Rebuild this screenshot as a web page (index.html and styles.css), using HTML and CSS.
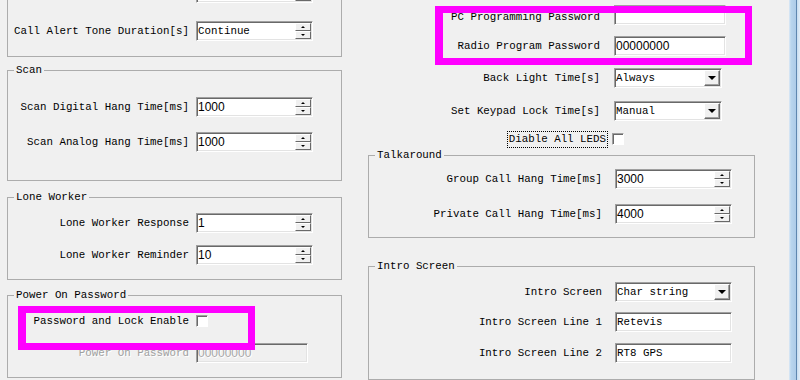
FILE: index.html
```html
<!DOCTYPE html>
<html lang="en">
<head>
    <meta charset="UTF-8">
    <title>Radio Settings</title>
    <link rel="stylesheet" href="styles.css">
</head>
<body>
<div class="screen">
    <div class="col-left">
        <fieldset class="group group-top">
            <div class="row">
                <span class="label"></span>
                <div class="spin"><span class="val"></span><div class="spin-btns"><i class="up"></i><i class="down"></i></div></div>
            </div>
            <div class="row">
                <span class="label">Call Alert Tone Duration[s]</span>
                <div class="spin"><span class="val mono">Continue</span><div class="spin-btns"><i class="up"></i><i class="down"></i></div></div>
            </div>
        </fieldset>

        <fieldset class="group group-scan">
            <legend>Scan</legend>
            <div class="row">
                <span class="label">Scan Digital Hang Time[ms]</span>
                <div class="spin"><span class="val">1000</span><div class="spin-btns"><i class="up"></i><i class="down"></i></div></div>
            </div>
            <div class="row">
                <span class="label">Scan Analog Hang Time[ms]</span>
                <div class="spin"><span class="val">1000</span><div class="spin-btns"><i class="up"></i><i class="down"></i></div></div>
            </div>
        </fieldset>

        <fieldset class="group group-lone">
            <legend>Lone Worker</legend>
            <div class="row">
                <span class="label">Lone Worker Response</span>
                <div class="spin"><span class="val">1</span><div class="spin-btns"><i class="up"></i><i class="down"></i></div></div>
            </div>
            <div class="row">
                <span class="label">Lone Worker Reminder</span>
                <div class="spin"><span class="val">10</span><div class="spin-btns"><i class="up"></i><i class="down"></i></div></div>
            </div>
        </fieldset>

        <fieldset class="group group-power">
            <legend>Power On Password</legend>
            <div class="row">
                <span class="label">Password and Lock Enable</span>
                <span class="check"></span>
            </div>
            <div class="row">
                <span class="label disabled">Power On Password</span>
                <div class="edit edit-off"><span class="val">00000000</span></div>
            </div>
        </fieldset>
    </div>

    <div class="col-right">
        <div class="plain">
            <div class="row">
                <span class="label low">PC Programming Password</span>
                <div class="edit edit-pw"><span class="val"></span></div>
            </div>
            <div class="row">
                <span class="label">Radio Program Password</span>
                <div class="edit edit-pw"><span class="val">00000000</span></div>
            </div>
            <div class="row">
                <span class="label">Back Light Time[s]</span>
                <div class="combo combo-short"><span class="val mono">Always</span><span class="drop"><i></i></span></div>
            </div>
            <div class="row">
                <span class="label">Set Keypad Lock Time[s]</span>
                <div class="combo combo-short"><span class="val mono">Manual</span><span class="drop"><i></i></span></div>
            </div>
            <div class="check-row">
                <span class="focus">Diable All LEDS</span>
                <span class="check"></span>
            </div>
        </div>

        <fieldset class="group group-talk">
            <legend>Talkaround</legend>
            <div class="row">
                <span class="label">Group Call Hang Time[ms]</span>
                <div class="spin"><span class="val">3000</span><div class="spin-btns"><i class="up"></i><i class="down"></i></div></div>
            </div>
            <div class="row">
                <span class="label">Private Call Hang Time[ms]</span>
                <div class="spin"><span class="val">4000</span><div class="spin-btns"><i class="up"></i><i class="down"></i></div></div>
            </div>
        </fieldset>

        <fieldset class="group group-intro">
            <legend>Intro Screen</legend>
            <div class="row">
                <span class="label">Intro Screen</span>
                <div class="combo"><span class="val mono">Char string</span><span class="drop"><i></i></span></div>
            </div>
            <div class="row">
                <span class="label">Intro Screen Line 1</span>
                <div class="edit"><span class="val mono">Retevis</span></div>
            </div>
            <div class="row">
                <span class="label">Intro Screen Line 2</span>
                <div class="edit"><span class="val mono">RT8 GPS</span></div>
            </div>
        </fieldset>
    </div>

    <div class="frame-edge"></div>
</div>

<div class="mark mark-left"></div>
<div class="mark mark-right"></div>
</body>
</html>
```

FILE: styles.css
```css
*{margin:0;padding:0;box-sizing:border-box;}
html,body{height:100%;}
body{
    position:relative;
    background:#f0f0f0;
    color:#000;
    font:10.8px/13px "Liberation Mono",monospace;
    overflow:hidden;
}
.screen{
    display:flex;
    height:380px;
}
.col-left{
    width:368px;
    padding-left:7px;
    display:flex;
    flex-direction:column;
}
.col-right{
    width:387px;
    display:flex;
    flex-direction:column;
}
.frame-edge{
    margin-left:auto;
    width:11px;
    background:linear-gradient(to right,#dce9f5 0,#b9d5ee 2px,#aecbe8 7px,#5f87b0 7px,#5f87b0 8px,#c7dcf0 8px,#e3eef8 11px);
}

/* group boxes */
.group{
    border:1px solid #acacac;
    min-width:0;
}
.group legend{
    margin-left:6px;
    padding:0 2px;
    line-height:13px;
}
.col-left .group{width:335px;}
.col-right .group{width:387px;}

.group-top{margin-top:-40px;padding:22px 0 15px;}
.group-top .row + .row{margin-top:18px;}
.group-scan{margin-top:7px;padding:20px 0 28px;}
.group-scan .row + .row{margin-top:15px;}
.group-lone{margin-top:10px;padding:9px 0 14px;}
.group-lone .row + .row{margin-top:12px;}
.group-power{margin-top:9px;padding:9px 0 14px;}
.group-power .row + .row{margin-top:12px;}

.group-talk{padding:7px 0 13px;}
.group-talk .row + .row{margin-top:15px;}
.group-intro{margin-top:22px;padding:9px 0 16px;}
.group-intro .row + .row{margin-top:10px;}
.group-intro .row:last-child{margin-top:11px;}

/* rows */
.row{
    display:grid;
    grid-template-columns:181px auto;
    column-gap:7px;
    align-items:center;
    height:20px;
}
.col-right .row{
    grid-template-columns:233px auto;
    column-gap:13px;
}
.plain{padding-top:5px;}
.plain .row:nth-child(2){margin-top:11px;}
.plain .row:nth-child(3){margin-top:12px;}
.plain .row:nth-child(4){margin-top:13px;}
.label{
    text-align:right;
    white-space:nowrap;
}
.label.low{padding-top:4px;}
.label.disabled{
    color:#a0a0a0;
    text-shadow:1px 1px 0 #fff;
}
.plain .row .label{padding-right:1px;}

/* fields */
.val{
    flex:1;
    padding-left:1px;
    font:12px/16px "Liberation Sans",Arial,sans-serif;
    white-space:nowrap;
    overflow:hidden;
}
.val.mono{font:10.8px/16px "Liberation Mono",monospace;}
.spin,.edit,.combo{
    display:flex;
    align-items:center;
    width:117px;
    height:20px;
    background:#fff;
    border:1px solid;
    border-color:#a0a0a0 #fff #fff #a0a0a0;
    box-shadow:inset 1px 1px 0 #696969,inset -1px -1px 0 #e3e3e3;
}
.edit-pw{width:112px;}
.edit-off{
    width:112px;
    background:#f0f0f0;
}
.edit-off .val{
    color:#a8a8a8;
    text-shadow:1px 1px 0 #fff;
}
.combo-short{width:108px;}
.spin-btns{
    display:flex;
    flex-direction:column;
    width:16px;
    height:16px;
    margin-right:1px;
}
.spin-btns i{
    flex:1;
    display:flex;
    align-items:center;
    justify-content:center;
    background:#f0f0f0;
    border:1px solid;
    border-color:#fff #696969 #696969 #fff;
}
.spin-btns i::after{
    content:"";
    border-left:2px solid transparent;
    border-right:2px solid transparent;
}
.spin-btns .up::after{border-bottom:2px solid #000;}
.spin-btns .down::after{border-top:2px solid #000;}
.drop{
    display:flex;
    align-items:center;
    justify-content:center;
    width:16px;
    height:16px;
    margin-right:1px;
    background:#f0f0f0;
    border:1px solid;
    border-color:#fff #696969 #696969 #fff;
    box-shadow:inset -1px -1px 0 #a0a0a0;
}
.drop i{
    border-left:4px solid transparent;
    border-right:4px solid transparent;
    border-top:4px solid #000;
}

/* checkboxes */
.check{
    width:12px;
    height:12px;
    background:#fff;
    border:1px solid;
    border-color:#a0a0a0 #fff #fff #a0a0a0;
    box-shadow:inset 1px 1px 0 #696969;
}
.check-row{
    display:flex;
    align-items:center;
    justify-content:flex-end;
    column-gap:4px;
    width:256px;
    height:20px;
    margin-top:8px;
}
.focus{
    padding:1px 1px;
    border:1px dotted #000;
    line-height:13px;
}

/* annotation frames */
.mark{
    position:absolute;
    border:7px solid #f0f;
}
.mark-left{left:18px;top:306px;width:237px;height:44px;border-left-width:8px;}
.mark-right{left:435px;top:6px;width:317px;height:59px;border-left-width:8px;}
```
